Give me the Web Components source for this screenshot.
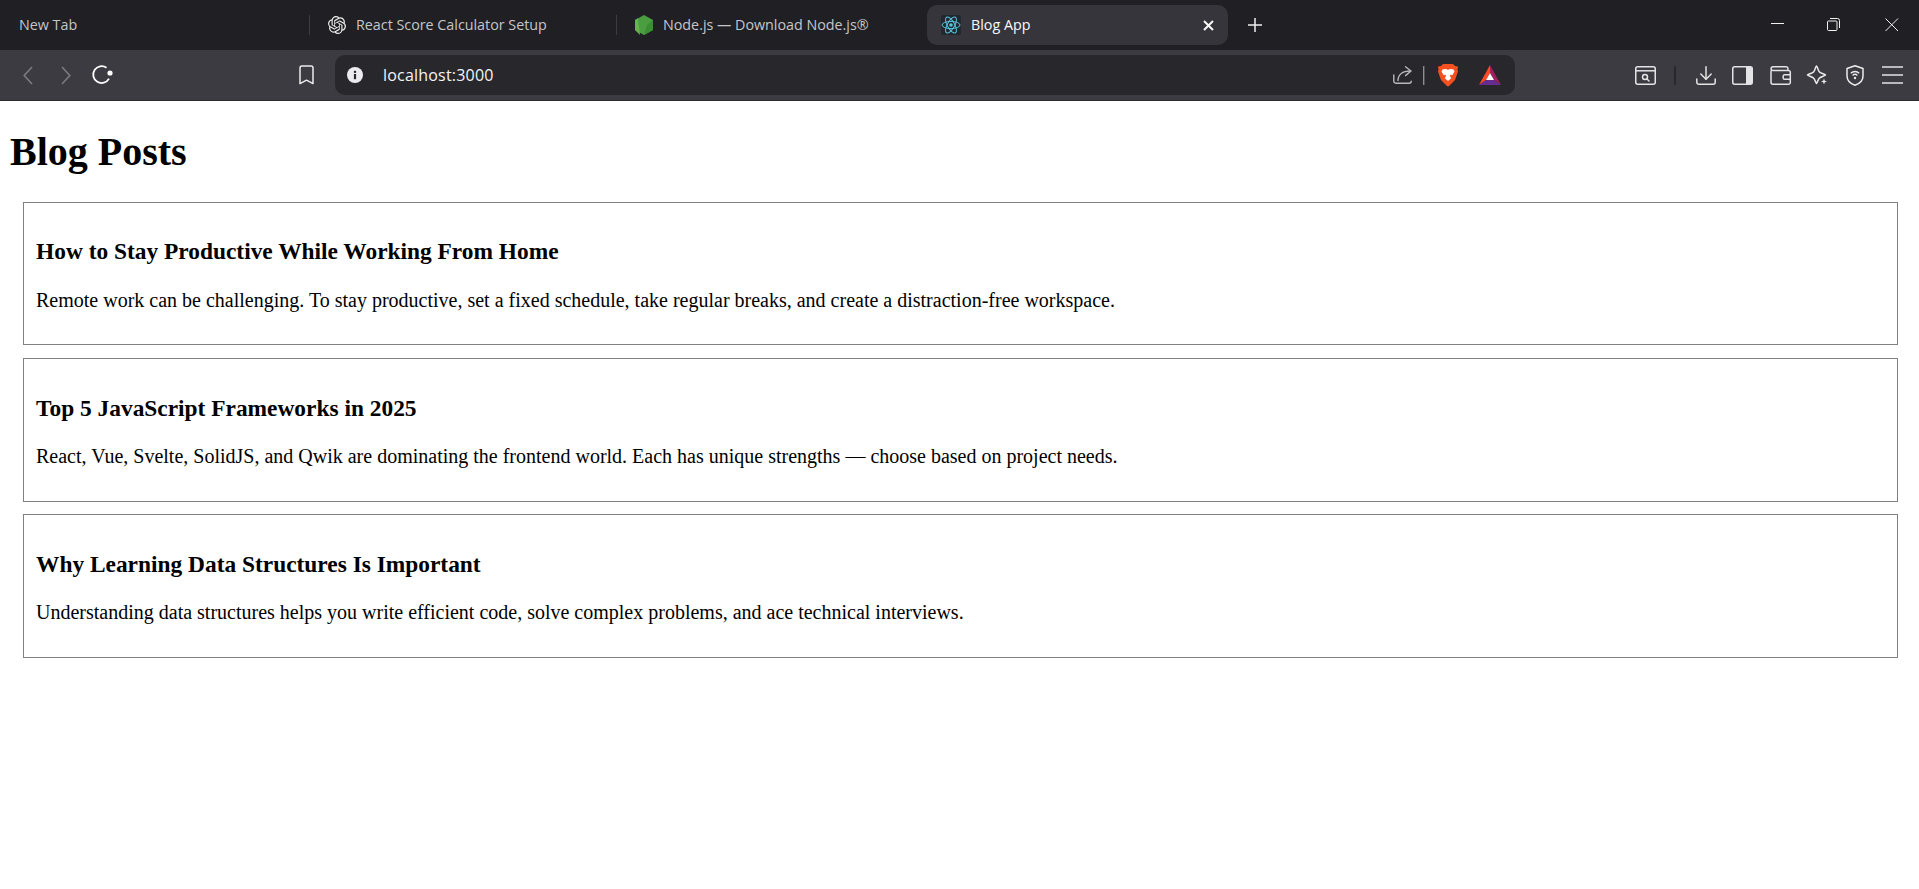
<!DOCTYPE html>
<html lang="en">
<head>
<meta charset="utf-8">
<title>Blog App</title>
<style>
html,body{margin:0;height:889px;overflow:hidden;background:#fff}
body{font-family:"Liberation Serif","Times New Roman",serif;color:#000}
</style>
</head>
<body>
<browser-frame>
  <tab-strip>
    <browser-tab width="309" pad="19">New Tab</browser-tab>
    <browser-tab width="307" pad="19" sep icon="gpt">React Score Calculator Setup</browser-tab>
    <browser-tab width="311" pad="19" sep icon="node">Node.js — Download Node.js®</browser-tab>
    <browser-tab width="301" pad="14" active icon="react">Blog App</browser-tab>
    <window-controls></window-controls>
  </tab-strip>
  <nav-bar>
    <tool-icon name="back" w="10" h="19" style="margin-left:23px"></tool-icon>
    <tool-icon name="forward" w="10" h="19" style="margin-left:28px"></tool-icon>
    <tool-icon name="reload" w="21" h="20" style="margin-left:21px"></tool-icon>
    <tool-icon name="bookmark" w="15" h="20" style="margin-left:186px"></tool-icon>
    <address-bar style="margin-left:21px">localhost:3000</address-bar>
    <tool-icon name="panel" w="21" h="19" style="margin-left:120px"></tool-icon>
    <tool-icon name="divider" w="2" h="19" style="margin-left:18px"></tool-icon>
    <tool-icon name="download" w="20" h="19" style="margin-left:20px"></tool-icon>
    <tool-icon name="sidebar" w="21" h="19" style="margin-left:16px"></tool-icon>
    <tool-icon name="wallet" w="21" h="19" style="margin-left:17px"></tool-icon>
    <tool-icon name="star" w="21" h="20" style="margin-left:16px"></tool-icon>
    <tool-icon name="shield" w="18" h="21" style="margin-left:18px"></tool-icon>
    <tool-icon name="menu" w="21" h="18" style="margin-left:18px"></tool-icon>
  </nav-bar>
</browser-frame>
<blog-page>
  <blog-post>
    <span slot="title">How to Stay Productive While Working From Home</span>
    Remote work can be challenging. To stay productive, set a fixed schedule, take regular breaks, and create a distraction-free workspace.
  </blog-post>
  <blog-post>
    <span slot="title">Top 5 JavaScript Frameworks in 2025</span>
    React, Vue, Svelte, SolidJS, and Qwik are dominating the frontend world. Each has unique strengths — choose based on project needs.
  </blog-post>
  <blog-post>
    <span slot="title">Why Learning Data Structures Is Important</span>
    Understanding data structures helps you write efficient code, solve complex problems, and ace technical interviews.
  </blog-post>
</blog-page>
<script>
const UI_FONT = '"Open Sans","Noto Sans",sans-serif';
const ICONS = {
  gpt:`<path fill="#ececec" transform="scale(.75)" d="M22.2819 9.8211a5.9847 5.9847 0 0 0-.5157-4.9108 6.0462 6.0462 0 0 0-6.5098-2.9A6.0651 6.0651 0 0 0 4.9807 4.1818a5.9847 5.9847 0 0 0-3.9977 2.9 6.0462 6.0462 0 0 0 .7427 7.0966 5.98 5.98 0 0 0 .511 4.9107 6.051 6.051 0 0 0 6.5146 2.9001A5.9847 5.9847 0 0 0 13.2599 24a6.0557 6.0557 0 0 0 5.7718-4.2058 5.9894 5.9894 0 0 0 3.9977-2.9001 6.0557 6.0557 0 0 0-.7475-7.0729zm-9.022 12.6081a4.4755 4.4755 0 0 1-2.8764-1.0408l.1419-.0804 4.7783-2.7582a.7948.7948 0 0 0 .3927-.6813v-6.7369l2.02 1.1686a.071.071 0 0 1 .038.052v5.5826a4.504 4.504 0 0 1-4.4945 4.4944zm-9.6607-4.1254a4.4708 4.4708 0 0 1-.5346-3.0137l.142.0852 4.783 2.7582a.7712.7712 0 0 0 .7806 0l5.8428-3.3685v2.3324a.0804.0804 0 0 1-.0332.0615L9.74 19.9502a4.4992 4.4992 0 0 1-6.1408-1.6464zM2.3408 7.8956a4.485 4.485 0 0 1 2.3655-1.9728V11.6a.7664.7664 0 0 0 .3879.6765l5.8144 3.3543-2.0201 1.1685a.0757.0757 0 0 1-.071 0l-4.8303-2.7865A4.504 4.504 0 0 1 2.3408 7.872zm16.5963 3.8558L13.1038 8.364 15.1192 7.2a.0757.0757 0 0 1 .071 0l4.8303 2.7913a4.4944 4.4944 0 0 1-.6765 8.1042v-5.6772a.79.79 0 0 0-.407-.667zm2.0107-3.0231l-.142-.0852-4.7735-2.7818a.7759.7759 0 0 0-.7854 0L9.409 9.2297V6.8974a.0662.0662 0 0 1 .0284-.0615l4.8303-2.7866a4.4992 4.4992 0 0 1 6.6802 4.66zM8.3065 12.863l-2.02-1.1638a.0804.0804 0 0 1-.038-.0567V6.0742a4.4992 4.4992 0 0 1 7.3757-3.4537l-.142.0805L8.704 5.459a.7948.7948 0 0 0-.3927.6813zm1.0976-2.3654l2.602-1.4998 2.6069 1.4998v2.9994l-2.5974 1.4997-2.6067-1.4997Z"/>`,
  node:`<polygon points="9,0 18,5 18,15 9,20 0,15 0,5" fill="#4a9e3f"/><polygon points="18,5 18,15 9,20 12,10" fill="#3e8c38"/><polygon points="0,5 3,3.300 5,20 0,15" fill="#62b64b"/>`,
  react:`<rect width="20" height="20" rx="2" fill="#23272f"/><g fill="none" stroke="#58c4dc" stroke-width="1"><ellipse cx="10" cy="10" rx="9" ry="3.6"/><ellipse cx="10" cy="10" rx="9" ry="3.6" transform="rotate(60 10 10)"/><ellipse cx="10" cy="10" rx="9" ry="3.6" transform="rotate(120 10 10)"/></g><circle cx="10" cy="10" r="1.8" fill="#58c4dc"/>`,
  back:`<polyline points="9,1 1.2,9.5 9,18" fill="none" stroke="#7b7b80" stroke-width="1.6"/>`,
  forward:`<polyline points="1,1 8.8,9.5 1,18" fill="none" stroke="#7b7b80" stroke-width="1.6"/>`,
  reload:`<path d="M14.5 2.8A8.4 8.4 0 1 0 17 13.6" fill="none" stroke="#ffffff" stroke-width="1.8"/><circle cx="18" cy="8" r="2.6" fill="#ffffff"/>`,
  bookmark:`<path d="M1 3a2 2 0 0 1 2-2h9a2 2 0 0 1 2 2v15.6l-6.5-3.4L1 18.6z" fill="none" stroke="#ececec" stroke-width="1.5" stroke-linejoin="round"/>`,
  info:`<circle cx="8" cy="8" r="8" fill="#ececf0"/><rect x="6.9" y="7" width="2.2" height="5.2" fill="#27272c"/><rect x="6.9" y="3.8" width="2.2" height="2.1" fill="#27272c"/>`,
  share:`<g fill="none" stroke="#b8b8bc" stroke-width="1.4" stroke-linecap="round" stroke-linejoin="round"><path d="M.8 9v6.2a2 2 0 0 0 2 2h13.4a2 2 0 0 0 2-2V16"/><path d="M5 14.5C5 9 9 5 17.5 5"/><path d="M12.5 .8 18 5l-5.5 4.6"/></g>`,
  urlsep:`<rect width="1.4" height="19" fill="#8e8e92"/>`,
  brave:`<path fill="#f5501f" d="M5 0h10l2 2 3 .5-.5 3 .5 2-3 8.500-6 6-1 .6-1-.6-6-6L0 7.500l.5-2L0 2.500 3 2z"/><path fill="#fff" d="M4.500 5.500 7.500 5l2.500.8L12.500 5l3 .5 1 2-2.200 3.700-1.500-.4-1 1 1.400 2.400L10 17l-3.200-2.800 1.400-2.400-1-1-1.500.4L3.500 7.500z"/>`,
  bat:`<polygon points="11,0 11,8 7,15 0,20" fill="#ff4a24"/><polygon points="11,0 22,20 15,15 11,8" fill="#a01f5e"/><polygon points="0,20 7,15 15,15 22,20" fill="#662d91"/><polygon points="11,8 7,15 15,15" fill="#fff"/>`,
  panel:`<g fill="none" stroke="#e4e4e6" stroke-width="1.5"><rect x=".75" y=".75" width="19.500" height="17.500" rx="2"/><path d="M1 4.800h19"/><circle cx="10" cy="11" r="2.500"/><path d="M12 13l2 2" stroke-linecap="round"/></g>`,
  divider:`<rect width="2" height="19" rx="1" fill="#27272c"/>`,
  download:`<g fill="none" stroke="#e4e4e6" stroke-width="1.5" stroke-linecap="round" stroke-linejoin="round"><path d="M10 .8V13"/><path d="M4.800 8 10 13.200 15.200 8"/><path d="M.8 13v3.200a2 2 0 0 0 2 2h14.400a2 2 0 0 0 2-2V13"/></g>`,
  sidebar:`<rect x=".75" y=".75" width="19.500" height="17.500" rx="2" fill="none" stroke="#e4e4e6" stroke-width="1.500"/><path d="M14 1h4.500A1.800 1.800 0 0 1 20.300 2.800v13.400A1.800 1.800 0 0 1 18.500 18H14z" fill="#e4e4e6"/>`,
  wallet:`<g fill="none" stroke="#e4e4e6" stroke-width="1.500" stroke-linejoin="round"><path d="M1 4.500V16.200a2 2 0 0 0 2 2h15.500a1.800 1.800 0 0 0 1.800-1.800V6.300a1.800 1.800 0 0 0-1.800-1.800H3A2 2 0 0 1 1 2.800 2 2 0 0 1 3 .8h13a2 2 0 0 1 2 2v1.700"/><path d="M20.300 8.800H14.500a1.300 1.300 0 0 0-1.300 1.300v1.800a1.300 1.300 0 0 0 1.300 1.300h5.800"/></g>`,
  star:`<path d="M9.500 1c1.200 1 1.500 4.500 3 6s5 2 6 3c-1 1-4.500 1.500-6 3s-2 4.500-3 5.500c-1-1-1.500-4-3-5.500s-5-2-6-3c1-1 4.500-1.500 6-3s1.800-5 3-6z" fill="none" stroke="#ececec" stroke-width="1.500" stroke-linejoin="round"/><path d="M17 13.500l.8 2.200 2.200.8-2.200.8-.8 2.200-.8-2.200-2.200-.8 2.200-.8z" fill="#ececec"/>`,
  shield:`<path d="M9 .8l8 2.700v7.500c0 4.800-3.800 7.800-8 9.300-4.200-1.500-8-4.500-8-9.300V3.500z" fill="none" stroke="#ececec" stroke-width="1.500" stroke-linejoin="round"/><g fill="none" stroke="#ececec" stroke-width="1.300"><path d="M4.800 8.200a6 6 0 0 1 8.400 0"/><path d="M6.600 10.500a3.400 3.400 0 0 1 4.800 0"/></g><circle cx="9" cy="13" r="1.200" fill="#ececec"/>`,
  menu:`<g stroke="#e4e4e6" stroke-width="1.700"><path d="M0 1h21M0 9h21M0 17h21"/></g>`,
  close:`<path d="M1 1l9 9M10 1l-9 9" stroke="#f8f8f8" stroke-width="2" fill="none"/>`,
  plus:`<path d="M7 0v14M0 7h14" stroke="#f0f0f0" stroke-width="1.500" fill="none"/>`,
  min:`<path d="M0 .5h13" stroke="#f0f0f0" stroke-width="1" fill="none"/>`,
  restore:`<g fill="none" stroke="#f0f0f0" stroke-width="1"><rect x=".5" y="3" width="9.500" height="9.500" rx="1"/><path d="M3 .5h7.500a2 2 0 0 1 2 2V10"/></g>`,
  winclose:`<path d="M.5.5l12.500 12.500M13 .5.5 13" stroke="#f0f0f0" stroke-width="1" fill="none"/>`
};

class Base extends HTMLElement {
  constructor(){ super(); this.attachShadow({mode:'open'}); }
}

customElements.define('tool-icon', class extends Base {
  connectedCallback(){
    const w=this.getAttribute('w')||16,h=this.getAttribute('h')||16,n=this.getAttribute('name');
    this.shadowRoot.innerHTML=`<style>:host{display:block;flex:none;width:${w}px;height:${h}px;line-height:0}svg{display:block;overflow:visible}</style>
    <svg width="${w}" height="${h}" viewBox="0 0 ${w} ${h}" aria-hidden="true">${ICONS[n]||''}</svg>`;
  }
});

customElements.define('browser-frame', class extends Base {
  constructor(){ super(); this.shadowRoot.innerHTML=`<style>:host{display:block}</style><slot></slot>`; }
});

customElements.define('tab-strip', class extends Base {
  constructor(){ super(); this.shadowRoot.innerHTML=`<style>:host{display:flex;align-items:center;height:50px;background:#1f1f24;font-family:${UI_FONT}}</style><slot></slot>`; }
});

customElements.define('browser-tab', class extends Base {
  connectedCallback(){
    const width=this.getAttribute('width'),pad=this.getAttribute('pad'),icon=this.getAttribute('icon');
    const active=this.hasAttribute('active'),sep=this.hasAttribute('sep');
    const sizes={gpt:[18,18,0],node:[18,20,0],react:[20,20,0]};
    const iconHtml=icon?`<tool-icon name="${icon}" w="${sizes[icon][0]}" h="${sizes[icon][1]}"></tool-icon>`:'';
    this.shadowRoot.innerHTML=`<style>
      :host{display:flex;align-items:center;flex:none;box-sizing:border-box;width:${width}px;height:40px;padding-left:${pad}px;gap:10px;position:relative;
        font-size:14.3px;color:${active?'#fafafa':'#c6c6c9'};background:${active?'#35353b':'transparent'};border-radius:10px}
      :host([sep])::before{content:"";position:absolute;left:0;top:10px;height:20px;width:1px;background:#3b3b41}
      .t{white-space:nowrap;flex:1;margin-top:-1px}
      .x{flex:none;margin-right:14px}
    </style>${iconHtml}<span class="t"><slot></slot></span>${active?'<tool-icon class="x" name="close" w="11" h="11"></tool-icon>':''}`;
  }
});

customElements.define('window-controls', class extends Base {
  constructor(){ super(); this.shadowRoot.innerHTML=`<style>
    :host{display:flex;align-items:center;flex:1;height:50px}
    .min{margin-left:509px;margin-top:-4px;}
    .res{margin-left:43px;margin-top:-1px}
    .cl{margin-left:45px;margin-top:-1px}
    .plus{margin-left:20px}
    </style>
    <tool-icon class="plus" name="plus" w="14" h="14"></tool-icon>
    <tool-icon class="min" name="min" w="13" h="1"></tool-icon>
    <tool-icon class="res" name="restore" w="13" h="13"></tool-icon>
    <tool-icon class="cl" name="winclose" w="13" h="13"></tool-icon>`; }
});

customElements.define('nav-bar', class extends Base {
  constructor(){ super(); this.shadowRoot.innerHTML=`<style>:host{display:flex;align-items:center;height:50px;background:#3b3b41;border-bottom:1px solid #2b2b30}</style><slot></slot>`; }
});

customElements.define('address-bar', class extends Base {
  constructor(){ super(); this.shadowRoot.innerHTML=`<style>
    :host{display:flex;align-items:center;flex:none;box-sizing:border-box;width:1180px;height:40px;padding-left:12px;background:#27272c;border-radius:10px;
      font-family:${UI_FONT};font-size:16px;letter-spacing:.2px;color:#f4f4f6}
    .t{margin-left:20px;flex:1}
    .s{margin-right:11px}.u{margin-right:14px}.b{margin-right:21px}.a{margin-right:14px}
    </style>
    <tool-icon name="info" w="16" h="16"></tool-icon>
    <span class="t"><slot></slot></span>
    <tool-icon class="s" name="share" w="19" h="18"></tool-icon>
    <tool-icon class="u" name="urlsep" w="1.4" h="19"></tool-icon>
    <tool-icon class="b" name="brave" w="20" h="23"></tool-icon>
    <tool-icon class="a" name="bat" w="22" h="20"></tool-icon>`; }
});

customElements.define('blog-page', class extends Base {
  constructor(){ super(); this.shadowRoot.innerHTML=`<style>
    :host{display:block;padding:0 9px 0 10px}
    h1{font-size:40px;font-weight:700;margin:27.900px 0 26.800px;line-height:46px}
    </style><h1>Blog Posts</h1><slot></slot>`; }
});

customElements.define('blog-post', class extends Base {
  constructor(){ super(); this.shadowRoot.innerHTML=`<style>
    :host{display:block;margin:12.500px;border:1px solid #808080;padding:12.500px;font-size:20px}
    h3{font-size:23.400px;font-weight:700;margin:23.200px 0 23.300px;line-height:27px}
    p{margin:23.300px 0 20.200px;line-height:23px}
    </style><h3><slot name="title"></slot></h3><p><slot></slot></p>`; }
});
</script>
</body>
</html>
